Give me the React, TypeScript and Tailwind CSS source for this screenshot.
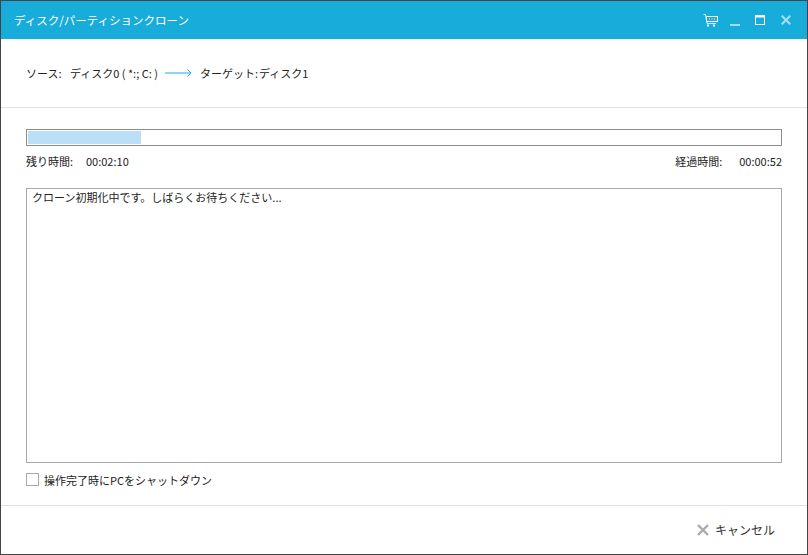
const font = { fontFamily: '"Noto Sans CJK JP", "Liberation Sans", sans-serif' };

export default function App() {
  return (
    <div
      className="flex h-[555px] w-[808px] flex-col overflow-hidden border border-[#444] bg-white text-[11px] leading-[14px] text-[#222]"
      style={font}
    >
      {/* タイトルバー */}
      <div className="flex h-[38px] shrink-0 items-center justify-between bg-[#18acdb] pl-[13px] pr-[16px] text-white">
        <span className="text-[11.5px]">ディスク/パーティションクローン</span>
        <div className="flex items-center">
          <svg width="15" height="13" viewBox="0 0 15 13" fill="none" className="mr-[12px]">
            <path d="M0.5 0.5H2.5L4 9.5H13" stroke="#d5f0f9" />
            <rect x="3.5" y="2.5" width="11" height="5" stroke="#fff" />
            <path d="M6 5H7M8.5 5H9.5M11 5H12" stroke="#fff" />
            <rect x="4" y="10.5" width="2" height="2" fill="#fff" />
            <rect x="10" y="10.5" width="2" height="2" fill="#fff" />
          </svg>
          <div className="mr-[15px] mt-[9px] h-[2px] w-[10px] bg-[#a5e0f2]" />
          <svg width="10" height="10" viewBox="0 0 10 10" fill="none" className="mr-[16px]">
            <rect x="0.5" y="0.5" width="9" height="9" stroke="#fff" />
            <rect x="0" y="0" width="10" height="2.5" fill="#fff" />
          </svg>
          <svg width="10" height="10" viewBox="0 0 10 10" fill="none">
            <path d="M0.8 0.8L9.2 9.2M9.2 0.8L0.8 9.2" stroke="#a5e0f2" strokeWidth="2" />
          </svg>
        </div>
      </div>

      {/* ソース / ターゲット */}
      <div className="flex h-[69px] shrink-0 items-center border-b border-[#e0e0e0] pl-[25px]">
        <span className="w-[44px]">ソース:</span>
        <span className="w-[95px]">ディスク0 ( *:; C: )</span>
        <svg width="27" height="8" viewBox="0 0 27 8" fill="none" className="mr-[8px]">
          <path d="M0 4H26M22.5 0.5L26 4L22.5 7.5" stroke="#18acdb" />
        </svg>
        <span className="w-[59px]">ターゲット:</span>
        <span>ディスク1</span>
      </div>

      <div className="flex flex-1 flex-col px-[25px] pt-[21px]">
        {/* 進捗バー */}
        <div className="h-[17px] w-[756px] border border-[#8c8c8c] p-px">
          <div className="h-full w-[113px] bg-[#bbdff6]" />
        </div>
        <div className="mt-[8px] flex h-[14px] justify-between">
          <div className="flex">
            <span className="w-[60px]">残り時間:</span>
            <span>00:02:10</span>
          </div>
          <div className="flex">
            <span className="w-[64px]">経過時間:</span>
            <span>00:00:52</span>
          </div>
        </div>

        {/* ログ */}
        <div className="mt-[20px] h-[275px] w-[756px] border border-[#aaa] px-[5px] pt-px">
          クローン初期化中です。しばらくお待ちください...
        </div>

        <label className="mt-[10px] flex h-[13px] items-center gap-[5px]">
          <span className="h-[13px] w-[13px] border border-[#aaa]" />
          操作完了時にPCをシャットダウン
        </label>
      </div>

      {/* フッター */}
      <div className="flex h-[49px] shrink-0 items-center justify-end border-t border-[#e0e0e0] pr-[32px]">
        <button className="flex items-center gap-[6px] text-[12px] text-[#333]">
          <svg width="12" height="12" viewBox="0 0 12 12" fill="none">
            <path d="M1 1L11 11M11 1L1 11" stroke="#aaa" strokeWidth="2.4" />
          </svg>
          キャンセル
        </button>
      </div>
    </div>
  );
}
